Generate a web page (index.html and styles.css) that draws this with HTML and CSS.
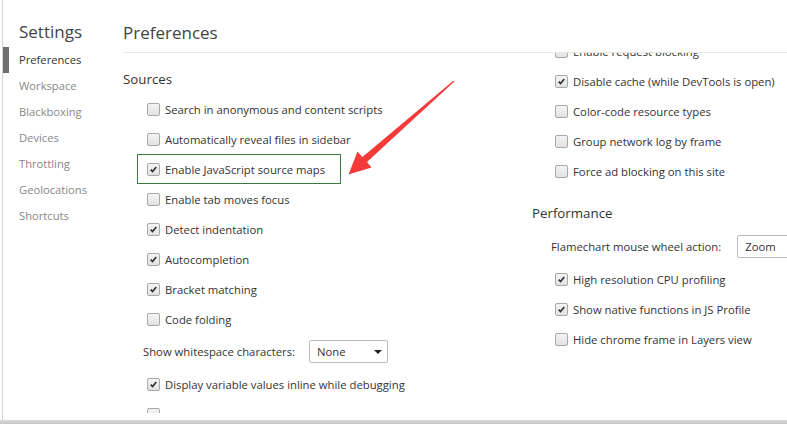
FILE: index.html
```html
<!DOCTYPE html>
<html>
<head>
<meta charset="utf-8">
<link rel="stylesheet" href="styles.css">
</head>
<body>
<div class="window">
  <aside class="sidebar">
    <div class="title">Settings</div>
    <nav class="nav">
      <div class="nav-item active">Preferences</div>
      <div class="nav-item">Workspace</div>
      <div class="nav-item">Blackboxing</div>
      <div class="nav-item">Devices</div>
      <div class="nav-item">Throttling</div>
      <div class="nav-item">Geolocations</div>
      <div class="nav-item">Shortcuts</div>
    </nav>
  </aside>
  <main class="main">
    <header class="main-header">Preferences</header>
    <div class="content">
      <section class="col col-left">
        <h2 class="section-title">Sources</h2>
        <label class="row"><span class="cb"></span>Search in anonymous and content scripts</label>
        <label class="row"><span class="cb"></span>Automatically reveal files in sidebar</label>
        <label class="row hl"><span class="cb on"><svg viewBox="0 0 13 13"><path d="M3.2 6.6 L5.4 9 L9.8 3.6"/></svg></span>Enable JavaScript source maps</label>
        <label class="row"><span class="cb"></span>Enable tab moves focus</label>
        <label class="row"><span class="cb on"><svg viewBox="0 0 13 13"><path d="M3.2 6.6 L5.4 9 L9.8 3.6"/></svg></span>Detect indentation</label>
        <label class="row"><span class="cb on"><svg viewBox="0 0 13 13"><path d="M3.2 6.6 L5.4 9 L9.8 3.6"/></svg></span>Autocompletion</label>
        <label class="row"><span class="cb on"><svg viewBox="0 0 13 13"><path d="M3.2 6.6 L5.4 9 L9.8 3.6"/></svg></span>Bracket matching</label>
        <label class="row"><span class="cb"></span>Code folding</label>
        <div class="select-row left-select">
          <span>Show whitespace characters:</span>
          <span class="select sel-none">None<span class="caret"></span></span>
        </div>
        <label class="row"><span class="cb on"><svg viewBox="0 0 13 13"><path d="M3.2 6.6 L5.4 9 L9.8 3.6"/></svg></span>Display variable values inline while debugging</label>
        <div class="row"><span class="cb"></span></div>
      </section>
      <section class="col col-right">
        <label class="row r"><span class="cb"></span>Enable request blocking</label>
        <label class="row r"><span class="cb on"><svg viewBox="0 0 13 13"><path d="M3.2 6.6 L5.4 9 L9.8 3.6"/></svg></span>Disable cache (while DevTools is open)</label>
        <label class="row r"><span class="cb"></span>Color-code resource types</label>
        <label class="row r"><span class="cb"></span>Group network log by frame</label>
        <label class="row r"><span class="cb"></span>Force ad blocking on this site</label>
        <h2 class="section-title perf">Performance</h2>
        <div class="select-row right-select">
          <span>Flamechart mouse wheel action:</span>
          <span class="select sel-zoom">Zoom</span>
        </div>
        <label class="row r"><span class="cb on"><svg viewBox="0 0 13 13"><path d="M3.2 6.6 L5.4 9 L9.8 3.6"/></svg></span>High resolution CPU profiling</label>
        <label class="row r"><span class="cb on"><svg viewBox="0 0 13 13"><path d="M3.2 6.6 L5.4 9 L9.8 3.6"/></svg></span>Show native functions in JS Profile</label>
        <label class="row r"><span class="cb"></span>Hide chrome frame in Layers view</label>
      </section>
    </div>
  </main>
  <svg class="annot-arrow" width="787" height="424" viewBox="0 0 787 424">
    <polygon points="453.6,80.4 454.4,81.6 367,162 371.5,167.5 348.5,174.5 357.5,151.5 362.4,157"/>
  </svg>
</div>
<div class="bottom-edge"></div>
</body>
</html>
```
FILE: styles.css
```css
* { box-sizing: border-box; }
html, body { margin: 0; padding: 0; background: #fff; }
body {
  font-family: "Open Sans", "Noto Sans", sans-serif;
  font-size: 11.3px;
  color: #333;
  width: 787px;
  height: 424px;
  overflow: hidden;
}
.window {
  position: relative;
  display: flex;
  height: 420px;
  margin-left: 2px;
  border-left: 1px solid #d4d4d4;
  overflow: hidden;
}
.sidebar {
  width: 120px;
  flex: none;
  padding-top: 20px;
}
.title {
  font-size: 17px;
  line-height: 24px;
  color: #444;
  padding-left: 16px;
}
.nav { margin-top: 3px; }
.nav-item {
  height: 26px;
  line-height: 26px;
  padding-left: 16px;
  color: #888;
  font-size: 11.2px;
}
.nav-item.active {
  color: #333;
  box-shadow: inset 6px 0 0 #6e6e6e;
}
.main {
  flex: 1;
  min-width: 0;
  display: flex;
  flex-direction: column;
}
.main-header {
  height: 53px;
  padding-top: 21px;
  font-size: 17px;
  line-height: 24px;
  color: #444;
  border-bottom: 1px solid #e8e8e8;
  flex: none;
}
.content {
  height: 360px;
  flex: none;
  display: flex;
  overflow: hidden;
}
.col-left {
  width: 409px;
  flex: none;
  padding-top: 16px;
}
.col-left .section-title { margin-bottom: 5px; }
.col-right {
  flex: 1;
  margin-top: -17px;
  min-width: 0;
}
.section-title {
  margin: 0 0 7px 0;
  font-size: 13.3px;
  line-height: 20px;
  font-weight: normal;
  color: #333;
}
.section-title.perf { margin-top: 17px; margin-bottom: 6px; }
.row {
  display: flex;
  align-items: center;
  height: 30px;
  padding-left: 24px;
  white-space: nowrap;
}
.row.r { padding-left: 23px; }
.row.hl {
  width: fit-content;
  margin-left: 14px;
  padding-left: 9px;
  padding-right: 15px;
  border: 1px solid #3d7a3d;
}
.cb {
  width: 13px;
  height: 13px;
  flex: none;
  margin-right: 5px;
  border: 1px solid #a8a8a8;
  border-radius: 2px;
  background: linear-gradient(#f4f4f4, #e2e2e2);
  display: flex;
}
.cb svg { width: 11px; height: 11px; }
.cb svg path {
  fill: none;
  stroke: #303030;
  stroke-width: 1.9;
}
.select-row {
  display: flex;
  align-items: center;
  white-space: nowrap;
}
.left-select { height: 35px; padding-left: 20px; gap: 14px; }
.right-select { height: 35px; padding-left: 19px; gap: 16px; }
.select {
  position: relative;
  display: flex;
  align-items: center;
  height: 23px;
  padding-left: 7px;
  border: 1px solid #bdbdbd;
  border-radius: 2px;
  background: #fff;
  color: #333;
  flex: none;
}
.sel-none { width: 79px; }
.sel-zoom { width: 80px; }
.caret {
  position: absolute;
  right: 5px;
  top: 9px;
  width: 0;
  height: 0;
  border-left: 4px solid transparent;
  border-right: 4px solid transparent;
  border-top: 4px solid #222;
}
.annot-arrow {
  position: absolute;
  left: -3px;
  top: 0;
  pointer-events: none;
}
.annot-arrow polygon { fill: #f53a3a; }
.bottom-edge {
  height: 4px;
  background: linear-gradient(#dcdcdc, #c4c4c4);
}
```
